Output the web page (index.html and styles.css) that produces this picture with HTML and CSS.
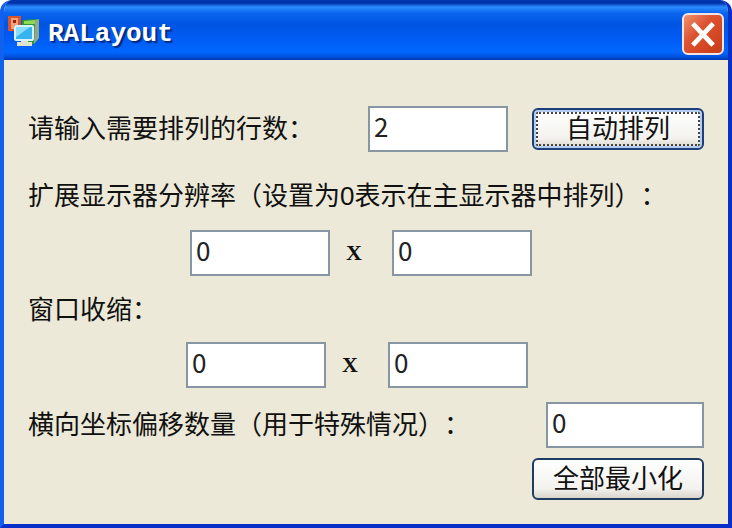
FILE: index.html
```html
<!DOCTYPE html>
<html lang="zh-CN">
<head>
  <meta charset="UTF-8" />
  <meta name="viewport" content="width=device-width, initial-scale=1.0" />
  <link rel="stylesheet" href="styles.css">
  <title>RALayout</title>
</head>
<body>
<div class="window">
  <header class="title-bar">
    <svg class="app-icon" viewBox="0 0 32 32" aria-hidden="true">
      <rect x="0" y="1" width="13" height="15" fill="#d9532c" />
      <path d="M3 3h7v7H6v4H3z" fill="#f7a27a" />
      <path d="M5 5h3v3H5zM9 11h3v3H9z" fill="#8e2412" />
      <path d="M14 5l16-1v21l-6 5H14z" fill="#2c9a3c" />
      <path d="M16 6l11-1v4H16z" fill="#8fd955" />
      <path d="M27 5l4-1v19l-5 6z" fill="#8fa88c" />
      <rect x="6" y="10" width="20" height="16" rx="2" fill="#d8f1fb" />
      <rect x="8" y="12" width="16" height="12" fill="#35b4ee" />
      <path d="M8 12h14L8 22z" fill="#8bdcf8" />
      <path d="M13 26h7v1h4v4H9v-4h4z" fill="#dfe2cf" />
    </svg>
    <h1>RALayout</h1>
    <button type="button" class="close-button" aria-label="关闭">
      <svg viewBox="0 0 40 40" aria-hidden="true">
        <path d="M11 11L29 30M29 11L11 30" stroke="#fff" stroke-width="5" stroke-linecap="square" />
      </svg>
    </button>
  </header>

  <form class="content">
    <div class="row">
      <label for="rows">请输入需要排列的行数：</label>
      <input type="text" id="rows" value="2">
      <button type="button" class="button focused">自动排列</button>
    </div>

    <div class="group" role="group" aria-labelledby="resolution">
      <p id="resolution">扩展显示器分辨率（设置为<span class="digit">0</span>表示在主显示器中排列）：</p>
      <div class="pair resolution-pair">
        <input type="text" value="0" aria-label="宽度">
        <span class="times">X</span>
        <input type="text" value="0" aria-label="高度">
      </div>
    </div>

    <div class="group" role="group" aria-labelledby="shrink">
      <p id="shrink">窗口收缩：</p>
      <div class="pair shrink-pair">
        <input type="text" value="0" aria-label="横向收缩">
        <span class="times">X</span>
        <input type="text" value="0" aria-label="纵向收缩">
      </div>
    </div>

    <div class="row offset-row">
      <label for="offset">横向坐标偏移数量（用于特殊情况）：</label>
      <input type="text" id="offset" class="wide" value="0">
    </div>

    <div class="row actions">
      <button type="button" class="button">全部最小化</button>
    </div>
  </form>
</div>
</body>
</html>
```
FILE: styles.css
```css
* {
  box-sizing: border-box;
}

body {
  margin: 0;
  background: #fff;
  color: #111;
  font-family: "Noto Sans CJK SC", sans-serif;
  font-size: 26px;
  line-height: 40px;
  text-spacing-trim: space-all;
}

/* Window frame */
.window {
  display: flex;
  flex-direction: column;
  min-height: 100vh;
  border: 4px solid #0a2fc8;
  border-top: none;
  border-left-color: #1260ee;
  border-radius: 12px 12px 0 0;
  background: #ece9d8;
  overflow: hidden;
}

.title-bar {
  display: flex;
  align-items: center;
  height: 60px;
  margin: 0 -4px;
  padding: 8px 8px 0;
  background: linear-gradient(#0038b0 0, #0030a8 3px, #2a8cff 7px, #0a66ee 13px, #0054e3 24px, #005cf4 40px, #0068ff 52px, #0050d8 57px, #0036b4 60px);
}

.app-icon {
  width: 32px;
  height: 32px;
  margin-bottom: 6px;
}

h1 {
  flex: 1;
  margin: 0 0 0 8px;
  color: #fff;
  font-family: "Liberation Mono", monospace;
  font-size: 26px;
  font-weight: bold;
  line-height: 32px;
  text-shadow: 2px 2px 1px #062a80;
}

.close-button {
  width: 42px;
  height: 42px;
  padding: 0;
  border: 2px solid #f3e4e4;
  border-radius: 6px;
  background: linear-gradient(135deg, #ee9170, #dd5230 40%, #c83c18);
}

.close-button svg {
  display: block;
  width: 100%;
  height: 100%;
}

/* Form */
.content {
  flex: 1;
  padding: 46px 24px 20px;
}

.row {
  display: flex;
  align-items: center;
}

.row label {
  flex: 1;
  padding-bottom: 4px;
  white-space: nowrap;
}

p {
  margin: 0;
  white-space: nowrap;
}

.digit {
  font-family: "Liberation Sans", sans-serif;
}

input {
  width: 140px;
  height: 46px;
  padding: 0 4px 8px;
  border: 2px solid #8796a3;
  border-radius: 0;
  background: #fff;
  color: #222;
  font: inherit;
  line-height: 34px;
}

input.wide {
  width: 158px;
}

.button {
  width: 172px;
  height: 42px;
  margin-left: 24px;
  padding: 0 0 4px;
  border: 2px solid #1f3d63;
  border-radius: 6px;
  background: linear-gradient(#fff, #f3f2ee 75%, #d9d5ca);
  color: #111;
  font: inherit;
  line-height: 34px;
}

.focused {
  border-color: #1c3f78;
  box-shadow: inset 0 0 0 2px #b4ccf0;
  outline: 2px dotted #444;
  outline-offset: -6px;
}

.group {
  padding-top: 22px;
}

.group + .group {
  padding-top: 12px;
}

.pair {
  display: flex;
  align-items: center;
  padding-top: 14px;
}

.resolution-pair {
  padding-left: 162px;
}

.shrink-pair {
  padding-left: 158px;
}

.times {
  width: 62px;
  padding-left: 16px;
  font-family: "Liberation Serif", serif;
  font-size: 22px;
  font-weight: bold;
}

.offset-row {
  padding-top: 14px;
}

.actions {
  justify-content: flex-end;
  padding-top: 10px;
}
```
